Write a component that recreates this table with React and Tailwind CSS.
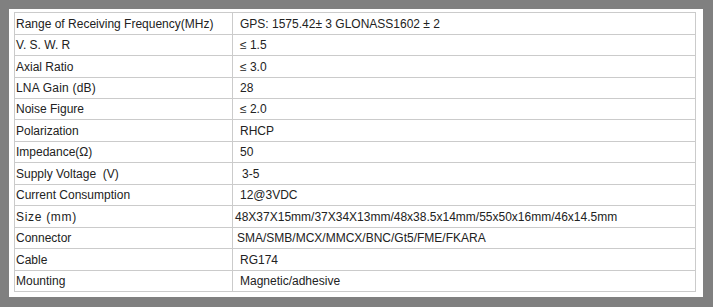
const specs = [
  { label: 'Range of Receiving Frequency(MHz)', value: 'GPS: 1575.42± 3 GLONASS1602 ± 2', h: 'h-[22px]', pad: 'pl-[7px]' },
  { label: 'V. S. W. R', value: '≤ 1.5', h: 'h-[21px]', pad: 'pl-[7px]' },
  { label: 'Axial Ratio', value: '≤ 3.0', h: 'h-[22px]', pad: 'pl-[7px]' },
  { label: 'LNA Gain (dB)', value: '28', h: 'h-[21px]', pad: 'pl-[7px]', track: 'tracking-[0.2px]' },
  { label: 'Noise Figure', value: '≤ 2.0', h: 'h-[21px]', pad: 'pl-[7px]' },
  { label: 'Polarization', value: 'RHCP', h: 'h-[22px]', pad: 'pl-[7px]' },
  { label: 'Impedance(Ω)', value: '50', h: 'h-[21px]', pad: 'pl-[7px]' },
  { label: 'Supply Voltage\u00a0 (V)', value: '3-5', h: 'h-[22px]', pad: 'pl-[9px]' },
  { label: 'Current Consumption', value: '12@3VDC', h: 'h-[21px]', pad: 'pl-[7px]' },
  { label: 'Size (mm)', value: '48X37X15mm/37X34X13mm/48x38.5x14mm/55x50x16mm/46x14.5mm', h: 'h-[22px]', pad: 'pl-[2px]', track: 'tracking-[0.7px]' },
  { label: 'Connector', value: 'SMA/SMB/MCX/MMCX/BNC/Gt5/FME/FKARA', h: 'h-[21px]', pad: 'pl-[4px]' },
  { label: 'Cable', value: 'RG174', h: 'h-[22px]', pad: 'pl-[7px]' },
  { label: 'Mounting', value: 'Magnetic/adhesive', h: 'h-[21px]', pad: 'pl-[7px]' },
];

const App = () => {
  return (
    <div className="w-[713px] h-[307px] bg-[#808080] p-[9px] font-['Liberation_Sans',Arial,sans-serif] text-[12px] text-[#222]">
      <div className="w-[694px] h-[288px] bg-white pl-[5px] pt-[3px]">
        <div className="w-[682px] border-x border-t border-[#cbcbcb]">
          {specs.map((row) => (
            <div key={row.label} className={`flex border-b border-[#cbcbcb] ${row.h}`}>
              <div className={`w-[218px] flex items-center pl-[1px] border-r border-[#cbcbcb] whitespace-nowrap ${row.track || ''}`}>
                {row.label}
              </div>
              <div className={`flex-1 flex items-center whitespace-nowrap ${row.pad}`}>
                {row.value}
              </div>
            </div>
          ))}
        </div>
      </div>
    </div>
  );
};

export default App;
